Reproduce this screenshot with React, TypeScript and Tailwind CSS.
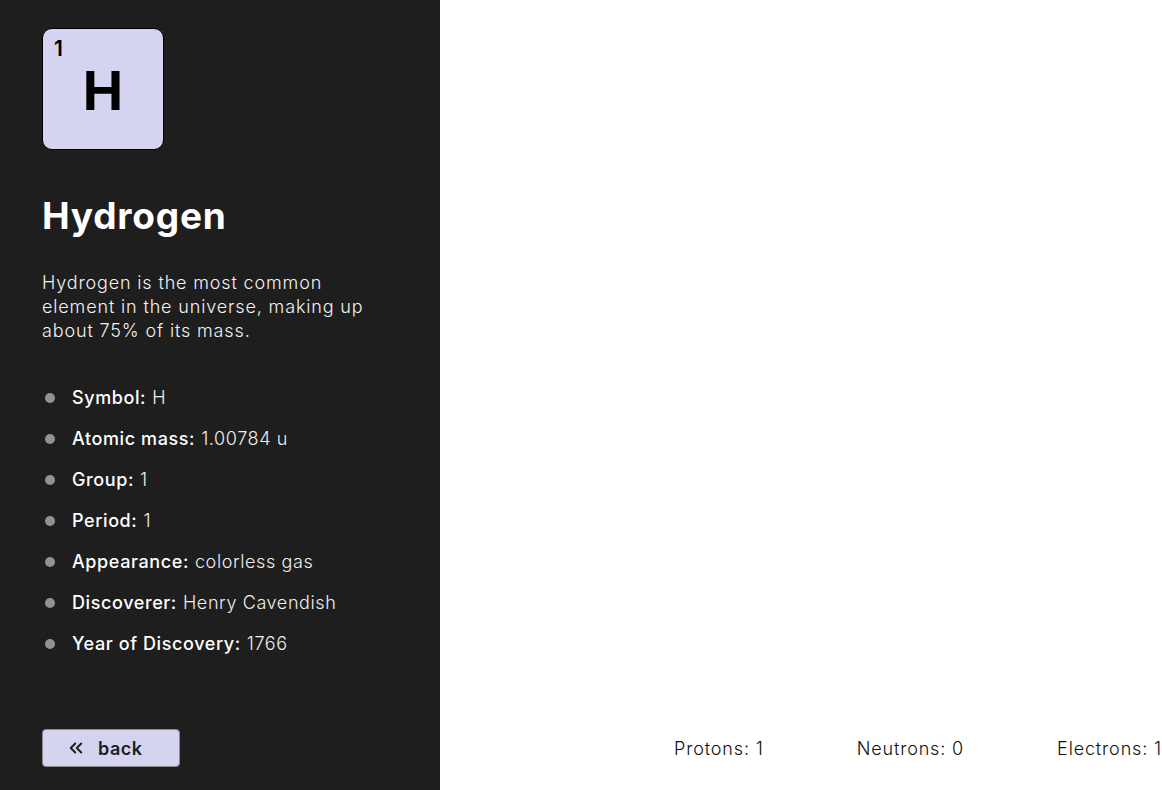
const facts = [
  { label: 'Symbol:', value: 'H' },
  { label: 'Atomic mass:', value: '1.00784 u' },
  { label: 'Group:', value: '1' },
  { label: 'Period:', value: '1' },
  { label: 'Appearance:', value: 'colorless gas' },
  { label: 'Discoverer:', value: 'Henry Cavendish' },
  { label: 'Year of Discovery:', value: '1766' },
]

const particles = [
  { label: 'Protons', value: 1 },
  { label: 'Neutrons', value: 0 },
  { label: 'Electrons', value: 1 },
]

export default function App() {
  return (
    <div className="flex h-[790px] w-[1162px] overflow-hidden bg-white font-['Inter',sans-serif]">
      <aside className="flex w-[440px] shrink-0 flex-col bg-[#1e1e1e] px-[42px] pt-[28px] pb-[23px] text-white">
        <div className="relative flex h-[122px] w-[122px] items-center justify-center rounded-[10px] border-[1.5px] border-black bg-[#d4d4f0] text-black">
          <span className="absolute left-[11px] top-[9px] text-[21px] font-semibold leading-none">1</span>
          <span className="mt-[4px] text-[54px] font-bold leading-none">H</span>
        </div>

        <h1 className="mt-[44px] text-[37px] font-bold leading-[44px] tracking-[0.8px]">Hydrogen</h1>

        <p className="mt-[33px] w-[340px] text-[18px] font-light leading-6 tracking-[0.85px] text-[#f2f2f2]">
          Hydrogen is the most common element in the universe, making up about 75% of its mass.
        </p>

        <ul className="mt-[43px] flex flex-col gap-[17px]">
          {facts.map((f) => (
            <li key={f.label} className="flex h-6 items-center text-[18px] leading-6 tracking-[0.6px]">
              <span className="mr-[17px] ml-[3px] h-[10px] w-[10px] shrink-0 rounded-full bg-[#929292]" />
              <span className="font-medium">{f.label}</span>
              <span className="ml-[6px] font-light text-[#eeeeee]">{f.value}</span>
            </li>
          ))}
        </ul>

        <div className="mt-auto">
          <button className="flex h-[38px] w-[138px] items-center rounded-[4px] border border-[#8a8a8a] bg-[#d4d4f0] pl-[24px] text-[18px] font-semibold tracking-[0.5px] text-[#1e1e1e]">
            <svg width="18" height="18" viewBox="0 0 24 24" fill="none" stroke="currentColor" strokeWidth="2.6" strokeLinecap="round" strokeLinejoin="round">
              <path d="M11 18l-6-6 6-6" />
              <path d="M19 18l-6-6 6-6" />
            </svg>
            <span className="ml-[13px]">back</span>
          </button>
        </div>
      </aside>

      <main className="flex flex-1 flex-col">
        <div className="flex-1" />
        <div className="flex h-[62px] items-start justify-end gap-[93px] pt-[9px] text-[18px] font-light leading-6 tracking-[0.85px] text-[#111]">
          {particles.map((p) => (
            <span key={p.label} className="whitespace-nowrap">
              {p.label}: {p.value}
            </span>
          ))}
        </div>
      </main>
    </div>
  )
}
